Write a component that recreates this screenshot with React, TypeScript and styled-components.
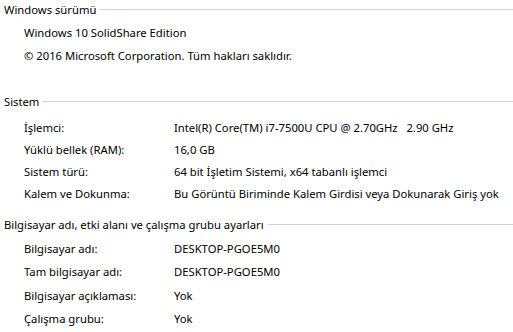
import styled, { createGlobalStyle } from "styled-components";

const GlobalStyle = createGlobalStyle`
  html, body {
    margin: 0;
    padding: 0;
    background: #ffffff;
  }
  body {
    font-family: "Noto Sans", "Liberation Sans", sans-serif;
    font-size: 11.25px;
    color: #000000;
  }
`;

const Page = styled.main`
  width: 513px;
  height: 332px;
  overflow: hidden;
  padding-left: 4px;
  box-sizing: border-box;
`;

const Section = styled.section<{ $top: number }>`
  margin-top: ${(p) => p.$top}px;
`;

const Header = styled.div`
  display: flex;
  align-items: center;
  height: 18px;
  white-space: nowrap;
`;

const Rule = styled.span`
  flex: 1;
  height: 1px;
  margin-left: 3px;
  background: #d4d4d4;
`;

const Rows = styled.div<{ $gap: number }>`
  margin-top: ${(p) => p.$gap}px;
  padding-left: 20px;
`;

const Row = styled.div<{ $h: number }>`
  display: grid;
  grid-template-columns: 150px 1fr;
  align-items: center;
  height: ${(p) => p.$h}px;
  white-space: nowrap;
`;

const Label = styled.span``;

const Value = styled.span``;

const systemRows = [
  ["İşlemci:", "Intel(R) Core(TM) i7-7500U CPU @ 2.70GHz\u00a0\u00a0\u00a02.90 GHz"],
  ["Yüklü bellek (RAM):", "16,0 GB"],
  ["Sistem türü:", "64 bit İşletim Sistemi, x64 tabanlı işlemci"],
  ["Kalem ve Dokunma:", "Bu Görüntü Biriminde Kalem Girdisi veya Dokunarak Giriş yok"],
];

const computerRows = [
  ["Bilgisayar adı:", "DESKTOP-PGOE5M0"],
  ["Tam bilgisayar adı:", "DESKTOP-PGOE5M0"],
  ["Bilgisayar açıklaması:", "Yok"],
  ["Çalışma grubu:", "Yok"],
];

export default function App() {
  return (
    <Page>
      <GlobalStyle />
      <Section $top={0}>
        <Header>
          Windows sürümü
          <Rule />
        </Header>
        <Rows $gap={3}>
          <Row $h={23}>Windows 10 SolidShare Edition</Row>
          <Row $h={23}>© 2016 Microsoft Corporation. Tüm hakları saklıdır.</Row>
        </Rows>
      </Section>

      <Section $top={25}>
        <Header>
          Sistem
          <Rule />
        </Header>
        <Rows $gap={6}>
          {systemRows.map(([label, value]) => (
            <Row $h={22} key={label}>
              <Label>{label}</Label>
              <Value>{value}</Value>
            </Row>
          ))}
        </Rows>
      </Section>

      <Section $top={11}>
        <Header>
          Bilgisayar adı, etki alanı ve çalışma grubu ayarları
          <Rule />
        </Header>
        <Rows $gap={3.5}>
          {computerRows.map(([label, value]) => (
            <Row $h={23.5} key={label}>
              <Label>{label}</Label>
              <Value>{value}</Value>
            </Row>
          ))}
        </Rows>
      </Section>
    </Page>
  );
}
